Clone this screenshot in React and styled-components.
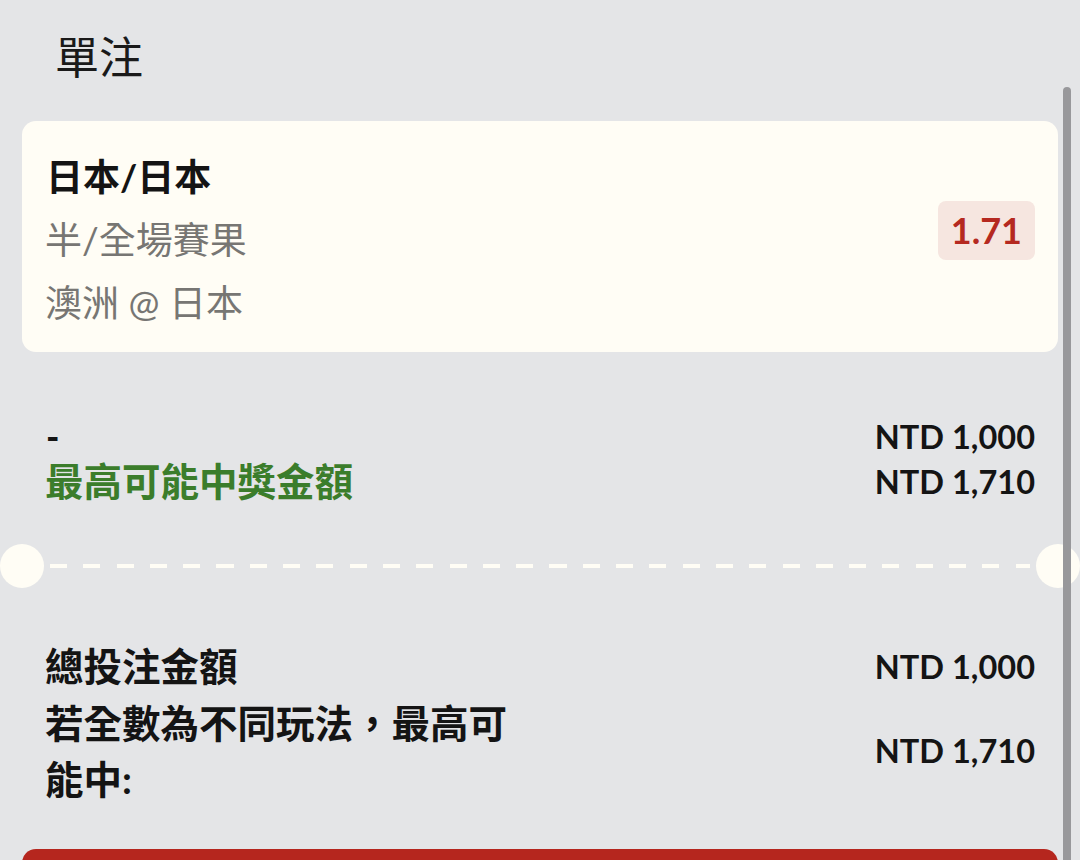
import React from "react";
import styled, { createGlobalStyle } from "styled-components";

const GlobalStyle = createGlobalStyle`
    html, body {
        margin: 0;
        padding: 0;
        overflow: hidden;
        background-color: #e4e5e7;
    }
    body {
        font-family: Lato, "Noto Sans CJK TC", "Noto Sans", sans-serif;
        color: #141414;
    }
`;

const Page = styled.div`
    position: relative;
    width: 1080px;
    height: 860px;
    overflow: hidden;
`;

const Title = styled.div`
    padding: 27px 0 0 55px;
    height: 60px;
    line-height: 60px;
    font-size: 44px;
    font-weight: 400;
    color: #1a1a1a;
`;

const Section = styled.div`
    padding: 0 22px;
`;

const BetCard = styled.div`
    margin-top: 34px;
    display: flex;
    align-items: center;
    justify-content: space-between;
    background-color: #fffdf5;
    border-radius: 14px;
    padding: 24px 23px 18px 25px;
`;

const BetInfo = styled.div`
    display: flex;
    flex-direction: column;
`;

const InfoLine = styled.div`
    line-height: 63px;
    font-size: 37px;
    font-weight: ${(props) => (props.$main ? 700 : 400)};
    color: ${(props) => (props.$main ? "#141414" : "#777673")};
    margin-left: ${(props) => (props.$main ? "-1px" : "-2px")};
`;

const OddsBadge = styled.div`
    margin-top: -18px;
    padding: 0 13px;
    height: 59px;
    line-height: 59px;
    border-radius: 8px;
    background-color: #f6e6e0;
    color: #b52920;
    font-size: 36px;
    font-weight: 700;
`;

const AmountGrid = styled.div`
    display: grid;
    grid-template-columns: minmax(0, 475px) 1fr;
    align-items: center;
    padding: ${(props) => props.$pad};
`;

const Label = styled.div`
    font-size: 38.5px;
    font-weight: 700;
    line-height: ${(props) => props.$lh};
    color: ${(props) => (props.$green ? "#3b7d2b" : "#141414")};
`;

const Dash = styled.div`
    font-size: 36px;
    font-weight: 900;
    line-height: 45px;
    margin-left: 1px;
`;

const Amount = styled.div`
    justify-self: end;
    font-family: Lato, sans-serif;
    font-size: 32.5px;
    font-weight: 700;
    line-height: ${(props) => props.$lh};
    color: #141414;
`;

const Divider = styled.div`
    display: flex;
    align-items: center;
    height: 44px;
`;

const Notch = styled.div`
    width: 44px;
    height: 44px;
    border-radius: 50%;
    background-color: #fffdf5;
    flex-shrink: 0;
`;

const DashLine = styled.div`
    flex: 1;
    height: 4px;
    margin: 0 6px;
    background-image: repeating-linear-gradient(
        to right,
        #fffdf5 0 17px,
        transparent 17px 33.3px
    );
`;

const ConfirmButton = styled.button`
    display: block;
    width: 100%;
    height: 80px;
    border: none;
    border-radius: 14px;
    background-color: #b5261e;
    margin-top: 42px;
`;

const Scrollbar = styled.div`
    position: absolute;
    top: 87px;
    right: 9px;
    width: 8px;
    height: 800px;
    border-radius: 4px;
    background-color: #98989b;
`;

export default function App() {
    return (
        <Page>
            <GlobalStyle />
            <Title>單注</Title>

            <Section>
                <BetCard>
                    <BetInfo>
                        <InfoLine $main>日本/日本</InfoLine>
                        <InfoLine>半/全場賽果</InfoLine>
                        <InfoLine>澳洲 @ 日本</InfoLine>
                    </BetInfo>
                    <OddsBadge>1.71</OddsBadge>
                </BetCard>

                <AmountGrid $pad="62px 23px 40px 23px">
                    <Dash>-</Dash>
                    <Amount $lh="45px">NTD 1,000</Amount>
                    <Label $green $lh="45px">
                        最高可能中獎金額
                    </Label>
                    <Amount $lh="45px">NTD 1,710</Amount>
                </AmountGrid>
            </Section>

            <Divider>
                <Notch />
                <DashLine />
                <Notch />
            </Divider>

            <Section>
                <AmountGrid $pad="50px 23px 0 23px">
                    <Label $lh="57px">總投注金額</Label>
                    <Amount $lh="57px">NTD 1,000</Amount>
                    <Label $lh="56px">若全數為不同玩法，最高可能中:</Label>
                    <Amount $lh="56px">NTD 1,710</Amount>
                </AmountGrid>

                <ConfirmButton />
            </Section>

            <Scrollbar />
        </Page>
    );
}
